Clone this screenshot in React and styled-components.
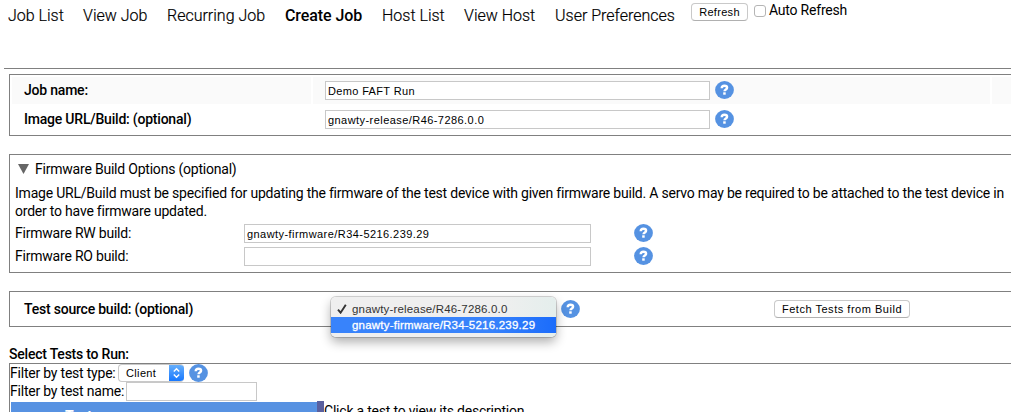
import React from 'react';
import styled, { createGlobalStyle } from 'styled-components';

const Global = createGlobalStyle`
  * { box-sizing: border-box; }
  html, body { margin: 0; background: #fff; overflow: hidden; }
  body { font-family: Roboto, sans-serif; font-size: 14px; line-height: 18px; letter-spacing: -0.213px; color: #000; }
`;

const Page = styled.div`
  width: 1011px;
  height: 412px;
  overflow: hidden;
  display: flex;
  flex-direction: column;
  white-space: nowrap;
`;

const TopBar = styled.header`
  height: 68px;
  flex: none;
  display: flex;
  align-items: flex-start;
  padding-left: 8px;
`;

const Tab = styled.span`
  width: ${(p) => p.$w}px;
  flex: none;
  margin-top: 6px;
  line-height: 20px;
  font-size: 16px;
  font-weight: ${(p) => (p.$active ? 500 : 300)};
  letter-spacing: ${(p) => (p.$active ? -0.08 : 0)}px;
  -webkit-text-stroke: ${(p) => (p.$active ? '0' : '0.2px #000')};
`;

const Button = styled.button`
  width: ${(p) => p.$w}px;
  height: 18px;
  margin: 0;
  padding: 0;
  border: 1px solid #c9c9c9;
  border-bottom-color: #b0b0b0;
  border-radius: 4px;
  background: #fff;
  color: #000;
  font: 11px/15px 'Liberation Sans', Arial, sans-serif;
  letter-spacing: ${(p) => p.$ls || 0}px;
`;

const RefreshSlot = styled.div`
  display: flex;
  margin-top: 3px;
`;

const AutoRefresh = styled.label`
  display: flex;
  gap: 3px;
  margin: 2px 0 0 6px;
`;

const Check = styled.span`
  width: 12px;
  height: 12px;
  border: 1px solid #b5b5b5;
  border-radius: 3px;
`;

const AutoText = styled.span`
  margin-top: -4px;
`;

const Rule = styled.div`
  flex: none;
  height: 1px;
  margin-left: 4px;
  background: #808080;
`;

const Panel = styled.section`
  flex: none;
  width: 1020px;
  height: ${(p) => p.$h}px;
  margin: ${(p) => p.$mt}px 0 0 9px;
  border: 1px solid #808080;
`;

const JobPanel = styled(Panel)`
  display: flex;
  flex-direction: column;
  gap: 2px;
  padding: 2px;
`;

const JobRow = styled.div`
  display: grid;
  grid-template-columns: 299px 677px 60px;
  column-gap: 2px;
  height: 27px;
`;

const Cell = styled.div`
  display: flex;
  align-items: flex-start;
  padding: 4px 0 0 12px;
  background: ${(p) => (p.$shade ? '#fafafa' : 'transparent')};
`;

const Label = styled.span`
  font-weight: 500;
`;

const Field = styled.div`
  flex: none;
  width: ${(p) => p.$w}px;
  height: 19px;
  border: 1px solid #c8c8c8;
  background: #fff;
  padding: 1px 0 0 2px;
  font: 11px/17px 'Liberation Sans', Arial, sans-serif;
  letter-spacing: ${(p) => p.$ls || 0}px;
`;

const HelpIcon = styled.svg`
  display: block;
  flex: none;
  width: 19px;
  height: 18px;
  margin-left: ${(p) => p.$ml || 0}px;
`;

function Help({ ml }) {
  return (
    <HelpIcon $ml={ml} viewBox="0 0 19 18">
      <ellipse cx="9.5" cy="9" rx="9.4" ry="9" fill="#5592e2" />
      <path d="M6.7 7.2C6.8 5.4 7.9 4.8 9.4 4.8c1.7 0 2.7.7 2.7 2 0 1.7-2.5 1.6-2.6 3.5" fill="none" stroke="#fff" strokeWidth="2.4" />
      <rect x="8.2" y="11.3" width="2.5" height="2.4" fill="#fff" />
    </HelpIcon>
  );
}

const FirmwarePanel = styled(Panel)`
  padding: 5px 0 0 5px;
`;

const Disclosure = styled.div`
  display: flex;
  align-items: center;
  height: 18px;
  gap: 6px;
  padding-left: 3px;
`;

const Triangle = styled.svg`
  width: 11px;
  height: 10px;
  display: block;
`;

const Description = styled.p`
  margin: 6px 0 0;
`;

const FirmwareRow = styled.div`
  display: grid;
  grid-template-columns: 229px 390px 19px;
  height: 19px;
  margin-top: 4px;
`;

const SourcePanel = styled(Panel)`
  display: grid;
  grid-template-columns: 321px 443px 136px;
  align-items: center;
`;

const SourceLabel = styled(Label)`
  padding-left: 14px;
`;

const SelectSlot = styled.div`
  position: relative;
  display: flex;
  align-items: center;
  padding-left: 230px;
`;

const Menu = styled.div`
  position: absolute;
  z-index: 2;
  left: 0;
  top: -3px;
  width: 225px;
  height: 40px;
  padding: 4px 0;
  border-radius: 5px;
  background: linear-gradient(90deg, #efefef 75%, #e4eeec);
  box-shadow: 0 0 0 1px rgba(0, 0, 0, 0.16), 0 5px 11px rgba(0, 0, 0, 0.32);
`;

const Option = styled.div`
  display: flex;
  align-items: center;
  height: 16px;
  font: 11.5px/16px 'Liberation Sans', Arial, sans-serif;
  letter-spacing: ${(p) => p.$ls || 0}px;
  color: ${(p) => (p.$on ? '#fff' : '#333')};
  -webkit-text-stroke: ${(p) => (p.$on ? '0.3px #fff' : '0')};
  background: ${(p) => (p.$on ? 'linear-gradient(90deg, #3883fb 70%, #1b6cfb)' : 'transparent')};
`;

const Mark = styled.span`
  display: flex;
  width: 21px;
  padding-left: 6px;
  flex: none;
`;

const Heading = styled.div`
  flex: none;
  height: 18px;
  margin: 18px 0 0 9px;
  font-weight: 500;
`;

const FilterRow = styled.div`
  display: flex;
  align-items: flex-start;
  height: ${(p) => p.$h}px;
`;

const FilterText = styled.span`
  width: ${(p) => p.$w}px;
  flex: none;
`;

const TypeSelect = styled.div`
  display: flex;
  justify-content: space-between;
  width: 66px;
  height: 18px;
  border: 1px solid #c9c9c9;
  border-right: 0;
  border-radius: 4px;
  overflow: hidden;
  padding-left: 7px;
  font: 11px/16px 'Liberation Sans', Arial, sans-serif;
  letter-spacing: 0.35px;
`;

const Stepper = styled.span`
  width: 15px;
  height: 18px;
  margin-top: -1px;
  background: linear-gradient(#6bb2fb, #1274fe);
`;

const Split = styled.div`
  display: flex;
  height: 30px;
`;

const TableHead = styled.div`
  width: 306px;
  height: 29px;
  margin: 1px 0 0 1px;
  padding: 5px 0 0 54px;
  background: #5792e2;
  color: #fff;
  font-weight: 700;
`;

const Splitter = styled.div`
  width: 7px;
  background: #5a609f;
`;

const Hint = styled.span`
  padding-top: 1px;
`;

const tabs = [
  ['Job List', 75],
  ['View Job', 84],
  ['Recurring Job', 118],
  ['Create Job', 97, true],
  ['Host List', 82],
  ['View Host', 91],
  ['User Preferences', 136],
];

export default function App() {
  return (
    <Page>
      <Global />
      <TopBar>
        {tabs.map(([name, w, active]) => (
          <Tab key={name} $w={w} $active={active}>{name}</Tab>
        ))}
        <RefreshSlot>
          <Button $w={57} $ls={0.3}>Refresh</Button>
          <AutoRefresh><Check /><AutoText>Auto Refresh</AutoText></AutoRefresh>
        </RefreshSlot>
      </TopBar>
      <Rule />
      <JobPanel $h={62} $mt={5}>
        <JobRow>
          <Cell $shade><Label>Job name:</Label></Cell>
          <Cell $shade><Field $w={385} $ls={0.35}>Demo FAFT Run</Field><Help ml={5} /></Cell>
          <Cell $shade />
        </JobRow>
        <JobRow>
          <Cell><Label>Image URL/Build: (optional)</Label></Cell>
          <Cell><Field $w={385} $ls={0.44}>gnawty-release/R46-7286.0.0</Field><Help ml={5} /></Cell>
          <Cell />
        </JobRow>
      </JobPanel>
      <FirmwarePanel $h={119} $mt={18}>
        <Disclosure>
          <Triangle viewBox="0 0 11 10"><path d="M0 0H11L5.5 10Z" fill="#666" /></Triangle>
          <span>Firmware Build Options (optional)</span>
        </Disclosure>
        <Description>
          Image URL/Build must be specified for updating the firmware of the test device with given firmware build. A servo may be required to be attached to the test device in<br />
          order to have firmware updated.
        </Description>
        <FirmwareRow>
          <span>Firmware RW build:</span>
          <Field $w={347} $ls={0.44}>gnawty-firmware/R34-5216.239.29</Field>
          <Help />
        </FirmwareRow>
        <FirmwareRow>
          <span>Firmware RO build:</span>
          <Field $w={347} />
          <Help />
        </FirmwareRow>
      </FirmwarePanel>
      <SourcePanel $h={36} $mt={18}>
        <SourceLabel>Test source build: (optional)</SourceLabel>
        <SelectSlot>
          <Menu>
            <Option $ls={0.17}>
              <Mark>
                <svg width="10" height="10" viewBox="0 0 10 10"><path d="M1 5.6 3.6 8.7 8.8 0.8" fill="none" stroke="#333" strokeWidth="1.9" /></svg>
              </Mark>
              gnawty-release/R46-7286.0.0
            </Option>
            <Option $on $ls={0.22}><Mark />gnawty-firmware/R34-5216.239.29</Option>
          </Menu>
          <Help />
        </SelectSlot>
        <Button $w={136} $ls={0.52}>Fetch Tests from Build</Button>
      </SourcePanel>
      <Heading>Select Tests to Run:</Heading>
      <Panel $h={70} $mt={0}>
        <FilterRow $h={18}>
          <FilterText $w={108}>Filter by test type:</FilterText>
          <TypeSelect>
            Client
            <Stepper>
              <svg width="15" height="18" viewBox="0 0 15 18"><path d="M4.8 7.4 7.5 4.8 10.2 7.4M4.8 10.6 7.5 13.2 10.2 10.6" fill="none" stroke="#fff" strokeWidth="1.4" /></svg>
            </Stepper>
          </TypeSelect>
          <Help ml={5} />
        </FilterRow>
        <FilterRow $h={19}>
          <FilterText $w={116}>Filter by test name:</FilterText>
          <Field $w={131} />
        </FilterRow>
        <Split>
          <TableHead>Test</TableHead>
          <Splitter />
          <Hint>Click a test to view its description.</Hint>
        </Split>
      </Panel>
    </Page>
  );
}
